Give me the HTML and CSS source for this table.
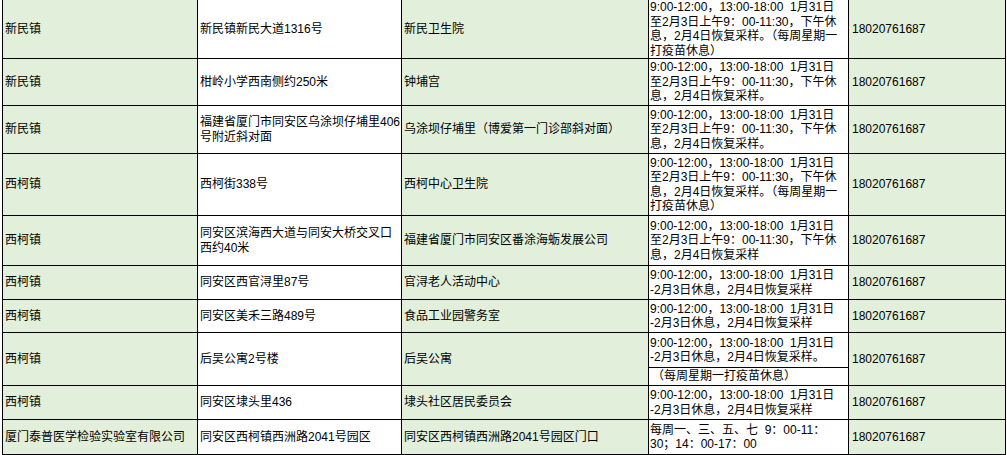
FILE: index.html
```html
<!DOCTYPE html>
<html lang="zh-CN">
<head>
<meta charset="utf-8">
<title>核酸采样点</title>
<link rel="stylesheet" href="styles.css">
</head>
<body>
<table class="sheet">
<tbody>
<tr class="h58">
<td class="c1">新民镇</td>
<td class="c2">新民镇新民大道1316号</td>
<td class="c3">新民卫生院</td>
<td class="c4">9:00-12:00，13:00-18:00&nbsp; 1月31日<br>至2月3日上午9：00-11:30，下午休<br>息，2月4日恢复采样。（每周星期一<br>打疫苗休息）</td>
<td class="c5">18020761687</td>
</tr>
<tr class="h47">
<td class="c1">新民镇</td>
<td class="c2">柑岭小学西南侧约250米</td>
<td class="c3">钟埔宫</td>
<td class="c4">9:00-12:00，13:00-18:00&nbsp; 1月31日<br>至2月3日上午9：00-11:30，下午休<br>息，2月4日恢复采样。</td>
<td class="c5">18020761687</td>
</tr>
<tr class="h48">
<td class="c1">新民镇</td>
<td class="c2">福建省厦门市同安区乌涂坝仔埔里406<br>号附近斜对面</td>
<td class="c3">乌涂坝仔埔里（博爱第一门诊部斜对面）</td>
<td class="c4">9:00-12:00，13:00-18:00&nbsp; 1月31日<br>至2月3日上午9：00-11:30，下午休<br>息，2月4日恢复采样。</td>
<td class="c5">18020761687</td>
</tr>
<tr class="h62">
<td class="c1">西柯镇</td>
<td class="c2">西柯街338号</td>
<td class="c3">西柯中心卫生院</td>
<td class="c4">9:00-12:00，13:00-18:00&nbsp; 1月31日<br>至2月3日上午9：00-11:30，下午休<br>息，2月4日恢复采样。（每周星期一<br>打疫苗休息）</td>
<td class="c5">18020761687</td>
</tr>
<tr class="h50">
<td class="c1">西柯镇</td>
<td class="c2">同安区滨海西大道与同安大桥交叉口<br>西约40米</td>
<td class="c3">福建省厦门市同安区番涂海蛎发展公司</td>
<td class="c4">9:00-12:00，13:00-18:00&nbsp; 1月31日<br>至2月3日上午9：00-11:30，下午休<br>息，2月4日恢复采样</td>
<td class="c5">18020761687</td>
</tr>
<tr class="h34">
<td class="c1">西柯镇</td>
<td class="c2">同安区西官浔里87号</td>
<td class="c3">官浔老人活动中心</td>
<td class="c4">9:00-12:00，13:00-18:00&nbsp; 1月31日<br>-2月3日休息，2月4日恢复采样</td>
<td class="c5">18020761687</td>
</tr>
<tr class="h33">
<td class="c1">西柯镇</td>
<td class="c2">同安区美禾三路489号</td>
<td class="c3">食品工业园警务室</td>
<td class="c4">9:00-12:00，13:00-18:00&nbsp; 1月31日<br>-2月3日休息，2月4日恢复采样</td>
<td class="c5">18020761687</td>
</tr>
<tr class="h35">
<td class="c1" rowspan="2">西柯镇</td>
<td class="c2" rowspan="2">后吴公寓2号楼</td>
<td class="c3" rowspan="2">后吴公寓</td>
<td class="c4">9:00-12:00，13:00-18:00&nbsp; 1月31日<br>-2月3日休息，2月4日恢复采样。</td>
<td class="c5" rowspan="2">18020761687</td>
</tr>
<tr class="h18">
<td class="c4 note">（每周星期一打疫苗休息）</td>
</tr>
<tr class="h34">
<td class="c1">西柯镇</td>
<td class="c2">同安区埭头里436</td>
<td class="c3">埭头社区居民委员会</td>
<td class="c4">9:00-12:00，13:00-18:00&nbsp; 1月31日<br>-2月3日休息，2月4日恢复采样</td>
<td class="c5">18020761687</td>
</tr>
<tr class="h35">
<td class="c1">厦门泰普医学检验实验室有限公司</td>
<td class="c2">同安区西柯镇西洲路2041号园区</td>
<td class="c3">同安区西柯镇西洲路2041号园区门口</td>
<td class="c4">每周一、三、五、七&nbsp; 9：00-11：<br>30；14：00-17：00</td>
<td class="c5">18020761687</td>
</tr>
<tr class="h2">
<td class="c1"></td>
<td class="c2"></td>
<td class="c3"></td>
<td class="c4"></td>
<td class="c5"></td>
</tr>
</tbody>
</table>
</body>
</html>
```

FILE: styles.css
```css
html, body {
  margin: 0;
  padding: 0;
  background: #ffffff;
}

body {
  font-family: "Liberation Sans", "Noto Sans CJK SC", sans-serif;
  font-size: 12px;
  color: #000000;
  overflow: hidden;
}

.sheet {
  border-collapse: separate;
  border-spacing: 0;
  table-layout: fixed;
  width: 1004px;
  margin: -1px 0 0 2px;
  border-left: 1px solid #000;
  border-top: 1px solid #000;
}

.sheet td {
  box-sizing: border-box;
  border-right: 1px solid #000;
  border-bottom: 1px solid #000;
  padding: 0 2px;
  vertical-align: middle;
  line-height: 14.5px;
  white-space: nowrap;
  overflow: visible;
}

.c1 { width: 195px; background: #e2efda; }
.c2 { width: 204px; background: #ffffff; }
.c3 { width: 247px; background: #e2efda; }
.c4 { width: 200px; background: #ffffff; padding-left: 1px !important; padding-right: 0 !important; }
.c5 { width: 157px; background: #e2efda; padding-left: 3px !important; }

.note { padding-left: 3px !important; }

.h58 { height: 58px; }
.h47 { height: 47px; }
.h48 { height: 48px; }
.h62 { height: 62px; }
.h50 { height: 50px; }
.h34 { height: 34px; }
.h33 { height: 33px; }
.h35 { height: 35px; }
.h18 { height: 18px; }
.h2 { height: 2px; }

.h2 td {
  border-bottom: 0;
  line-height: 0;
  font-size: 0;
}
```
